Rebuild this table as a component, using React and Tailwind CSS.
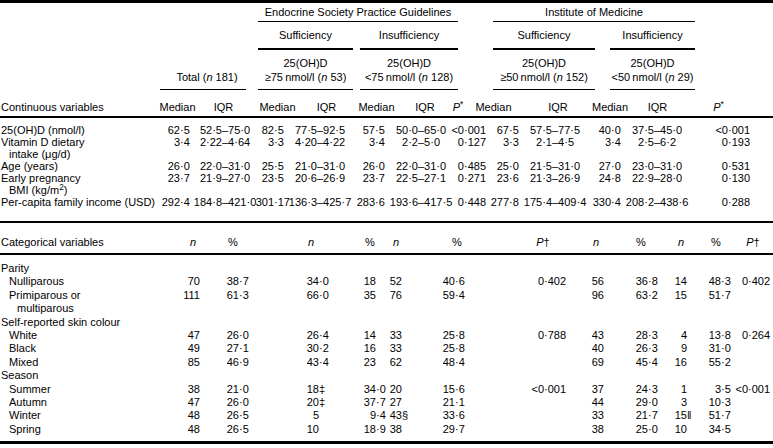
import React from 'react';

// column specs: every class written out in full
const CONT_COLS = [
  { w: 'w-[34px]', box: 'w-[20px]', kind: 'dec' },
  { w: 'w-[62px]', box: 'w-[28px]', kind: 'dash' },
  { w: 'w-[33px]', box: 'w-[18px]', kind: 'dec' },
  { w: 'w-[63px]', box: 'w-[28px]', kind: 'dash' },
  { w: 'w-[37px]', box: 'w-[23px]', kind: 'dec' },
  { w: 'w-[63px]', box: 'w-[29px]', kind: 'dash' },
  { w: 'w-[34px]', kind: 'right' },
  { w: 'w-[33px]', box: 'w-[23px]', kind: 'dec' },
  { w: 'w-[73px]', box: 'w-[33px]', kind: 'dash' },
  { w: 'w-[34px]', box: 'w-[19px]', kind: 'dec' },
  { w: 'w-[74px]', box: 'w-[28px]', kind: 'dash' },
  { w: 'w-[50px]', kind: 'right' },
];

const CONT_HEAD = [
  { w: 'w-[35px]', t: 'Median' },
  { w: 'w-[57px]', t: 'IQR' },
  { w: 'w-[51px]', t: 'Median' },
  { w: 'w-[47px]', t: 'IQR' },
  { w: 'w-[53px]', t: 'Median' },
  { w: 'w-[44px]', t: 'IQR' },
  { w: 'w-[22px]', t: 'P*' },
  { w: 'w-[49px]', t: 'Median' },
  { w: 'w-[80px]', t: 'IQR' },
  { w: 'w-[24px]', t: 'Median' },
  { w: 'w-[71px]', t: 'IQR' },
  { w: 'w-[51px]', t: 'P*' },
];

const CAT_COLS = [
  { w: 'w-[30px]', box: 'w-[25px]' },
  { w: 'w-[55px]', box: 'w-[34px]' },
  { w: 'w-[85px]', box: 'w-[59px]' },
  { w: 'w-[37px]', box: 'w-[31px]' },
  { w: 'w-[28px]', box: 'w-[20px]' },
  { w: 'w-[90px]', box: 'w-[45px]' },
  { w: 'w-[80px]', box: 'w-[44px]' },
  { w: 'w-[40px]', box: 'w-[24px]' },
  { w: 'w-[45px]', box: 'w-[28px]' },
  { w: 'w-[35px]', box: 'w-[22px]' },
  { w: 'w-[35px]', box: 'w-[21px]' },
  { w: 'w-[38px]', box: 'w-[13px]' },
];

const CAT_HEAD = [
  { w: 'w-[16px]', t: 'n' },
  { w: 'w-[64px]', t: '%' },
  { w: 'w-[92px]', t: 'n' },
  { w: 'w-[26px]', t: '%' },
  { w: 'w-[26px]', t: 'n' },
  { w: 'w-[96px]', t: '%' },
  { w: 'w-[76px]', t: 'P†' },
  { w: 'w-[30px]', t: 'n' },
  { w: 'w-[60px]', t: '%' },
  { w: 'w-[20px]', t: 'n' },
  { w: 'w-[50px]', t: '%' },
  { w: 'w-[24px]', t: 'P†' },
];

const CONT = [
  { l: '25(OH)D (nmol/l)', v: ['62·5', '52·5–75·0', '82·5', '77·5–92·5', '57·5', '50·0–65·0', '<0·001', '67·5', '57·5–77·5', '40·0', '37·5–45·0', '<0·001'] },
  { l: 'Vitamin D dietary', v: ['3·4', '2·22–4·64', '3·3', '4·20–4·22', '3·4', '2·2–5·0', '0·127', '3·3', '2·1–4·5', '3·4', '2·5–6·2', '0·193'] },
  { l: 'intake (μg/d)', ind: 1 },
  { l: 'Age (years)', v: ['26·0', '22·0–31·0', '25·5', '21·0–31·0', '26·0', '22·0–31·0', '0·485', '25·0', '21·5–31·0', '27·0', '23·0–31·0', '0·531'] },
  { l: 'Early pregnancy', v: ['23·7', '21·9–27·0', '23·5', '20·6–26·9', '23·7', '22·5–27·1', '0·271', '23·6', '21·3–26·9', '24·8', '22·9–28·0', '0·130'] },
  { l: 'bmi', ind: 1 },
  { l: 'Per-capita family income (USD)', v: ['292·4', '184·8–421·0', '301·17', '136·3–425·7', '283·6', '193·6–417·5', '0·448', '277·8', '175·4–409·4', '330·4', '208·2–438·6', '0·288'] },
];

const CAT = [
  { l: 'Parity' },
  { l: 'Nulliparous', ind: 1, v: ['70', '38·7', '34·0', '18', '52', '40·6', '0·402', '56', '36·8', '14', '48·3', '0·402'] },
  { l: 'Primiparous or', ind: 1, v: ['111', '61·3', '66·0', '35', '76', '59·4', '', '96', '63·2', '15', '51·7', ''] },
  { l: 'multiparous', ind: 2 },
  { l: 'Self-reported skin colour' },
  { l: 'White', ind: 1, v: ['47', '26·0', '26·4', '14', '33', '25·8', '0·788', '43', '28·3', '4', '13·8', '0·264'] },
  { l: 'Black', ind: 1, v: ['49', '27·1', '30·2', '16', '33', '25·8', '', '40', '26·3', '9', '31·0', ''] },
  { l: 'Mixed', ind: 1, v: ['85', '46·9', '43·4', '23', '62', '48·4', '', '69', '45·4', '16', '55·2', ''] },
  { l: 'Season' },
  { l: 'Summer', ind: 1, v: ['38', '21·0', '18‡', '34·0', '20', '15·6', '<0·001', '37', '24·3', '1', '3·5', '<0·001'] },
  { l: 'Autumn', ind: 1, v: ['47', '26·0', '20‡', '37·7', '27', '21·1', '', '44', '29·0', '3', '10·3', ''] },
  { l: 'Winter', ind: 1, v: ['48', '26·5', '5', '9·4', '43§', '33·6', '', '33', '21·7', '15‖', '51·7', ''] },
  { l: 'Spring', ind: 1, v: ['48', '26·5', '10', '18·9', '38', '29·7', '', '38', '25·0', '10', '34·5', ''] },
];

const IND = ['pl-[1px]', 'pl-[9px]', 'pl-[17px]'];

function HeadText({ t }) {
  if (t === 'P*') return <span><i>P</i><sup>*</sup></span>;
  if (t === 'P†') return <span><i>P</i>†</span>;
  if (t === 'n') return <i>n</i>;
  return <span>{t}</span>;
}

function Cell({ col, s }) {
  if (!s) return <div className={`${col.w} shrink-0`} />;
  if (col.kind === 'right') {
    return (
      <div className={`${col.w} shrink-0 flex justify-end whitespace-nowrap`}>
        <span>{s}</span>
      </div>
    );
  }
  let a, b;
  if (col.kind === 'dash') {
    [a, b] = s.split('–');
    b = '–' + b;
  } else {
    const m = s.match(/^(<?\d+)(.*)$/);
    a = m[1];
    b = m[2];
  }
  return (
    <div className={`${col.w} shrink-0 flex whitespace-nowrap`}>
      <div className={`${col.box} shrink-0 flex justify-end`}>
        <span>{a}</span>
      </div>
      <span>{b}</span>
    </div>
  );
}

function Label({ r }) {
  if (r.l === 'bmi') {
    return <>BMI (kg/m<sup>2</sup>)</>;
  }
  return r.l;
}

export default function App() {
  return (
    <div className="w-[773px] h-[448px] overflow-hidden bg-white text-black text-[11px] leading-[12px] font-['Liberation_Sans',Arial,sans-serif]">
      <div className="h-[3px] bg-black" />

      {/* guideline groups */}
      <div className="flex h-[19px]">
        <div className="w-[258px] shrink-0" />
        <div className="w-[200px] shrink-0 flex items-center justify-center border-b border-black whitespace-nowrap">
          Endocrine Society Practice Guidelines
        </div>
        <div className="w-[35px] shrink-0" />
        <div className="w-[202px] shrink-0 flex items-center justify-center border-b border-black whitespace-nowrap">
          Institute of Medicine
        </div>
      </div>

      <div className="flex h-[28px]">
        <div className="w-[258px] shrink-0" />
        <div className="w-[95px] shrink-0 flex justify-center pt-[7px] border-b-2 border-black">Sufficiency</div>
        <div className="w-[7px] shrink-0" />
        <div className="w-[98px] shrink-0 flex justify-center pt-[7px] border-b-2 border-black">Insufficiency</div>
        <div className="w-[35px] shrink-0" />
        <div className="w-[102px] shrink-0 flex justify-center pt-[7px] border-b-2 border-black">Sufficiency</div>
        <div className="w-[15px] shrink-0" />
        <div className="w-[85px] shrink-0 flex justify-center pt-[7px] border-b-2 border-black">Insufficiency</div>
      </div>

      <div className="flex h-[40px] leading-[14px] whitespace-nowrap">
        <div className="w-[160px] shrink-0" />
        <div className="w-[86px] shrink-0 flex justify-center pl-[8px] pt-[20px] border-b border-black">
          <span>Total (<i>n</i> 181)</span>
        </div>
        <div className="w-[12px] shrink-0" />
        <div className="w-[95px] shrink-0 flex flex-col items-center pt-[6px] border-b border-black">
          <span>25(OH)D</span>
          <span>≥75{'\u2009'}nmol/l (<i>n</i> 53)</span>
        </div>
        <div className="w-[7px] shrink-0" />
        <div className="w-[98px] shrink-0 flex flex-col items-center pt-[6px] border-b border-black">
          <span>25(OH)D</span>
          <span>&lt;75{'\u2009'}nmol/l (<i>n</i> 128)</span>
        </div>
        <div className="w-[35px] shrink-0" />
        <div className="w-[102px] shrink-0 flex flex-col items-center pt-[6px] border-b border-black">
          <span>25(OH)D</span>
          <span>≥50{'\u2009'}nmol/l (<i>n</i> 152)</span>
        </div>
        <div className="w-[15px] shrink-0" />
        <div className="w-[85px] shrink-0 flex flex-col items-center pt-[6px] border-b border-black">
          <span>25(OH)D</span>
          <span>&lt;50{'\u2009'}nmol/l (<i>n</i> 29)</span>
        </div>
      </div>

      {/* continuous variables */}
      <div className="flex h-[28px] pt-[11px] border-b-2 border-black whitespace-nowrap">
        <div className="w-[160px] shrink-0 pl-[1px]">Continuous variables</div>
        {CONT_HEAD.map((h, i) => (
          <div key={i} className={`${h.w} shrink-0 flex justify-center`}>
            <HeadText t={h.t} />
          </div>
        ))}
      </div>

      <div className="pt-[6px] pb-[13px] border-b-2 border-black">
        {CONT.map((r, i) => (
          <div key={i} className="flex h-[12px] whitespace-nowrap">
            <div className={`w-[160px] shrink-0 ${IND[r.ind || 0]}`}>
              <Label r={r} />
            </div>
            {r.v && CONT_COLS.map((c, j) => <Cell key={j} col={c} s={r.v[j]} />)}
          </div>
        ))}
      </div>

      {/* categorical variables */}
      <div className="flex h-[32px] pt-[13px] border-b-2 border-black whitespace-nowrap">
        <div className="w-[185px] shrink-0 pl-[1px]">Categorical variables</div>
        {CAT_HEAD.map((h, i) => (
          <div key={i} className={`${h.w} shrink-0 flex justify-center`}>
            <HeadText t={h.t} />
          </div>
        ))}
      </div>

      <div className="pt-[7px] pb-[5px] border-b-[3px] border-black">
        {CAT.map((r, i) => (
          <div key={i} className="flex h-[13.4px] leading-[13.4px] whitespace-nowrap">
            <div className={`w-[175px] shrink-0 ${IND[r.ind || 0]}`}>{r.l}</div>
            {r.v && CAT_COLS.map((c, j) => <Cell key={j} col={c} s={r.v[j]} />)}
          </div>
        ))}
      </div>
    </div>
  );
}
